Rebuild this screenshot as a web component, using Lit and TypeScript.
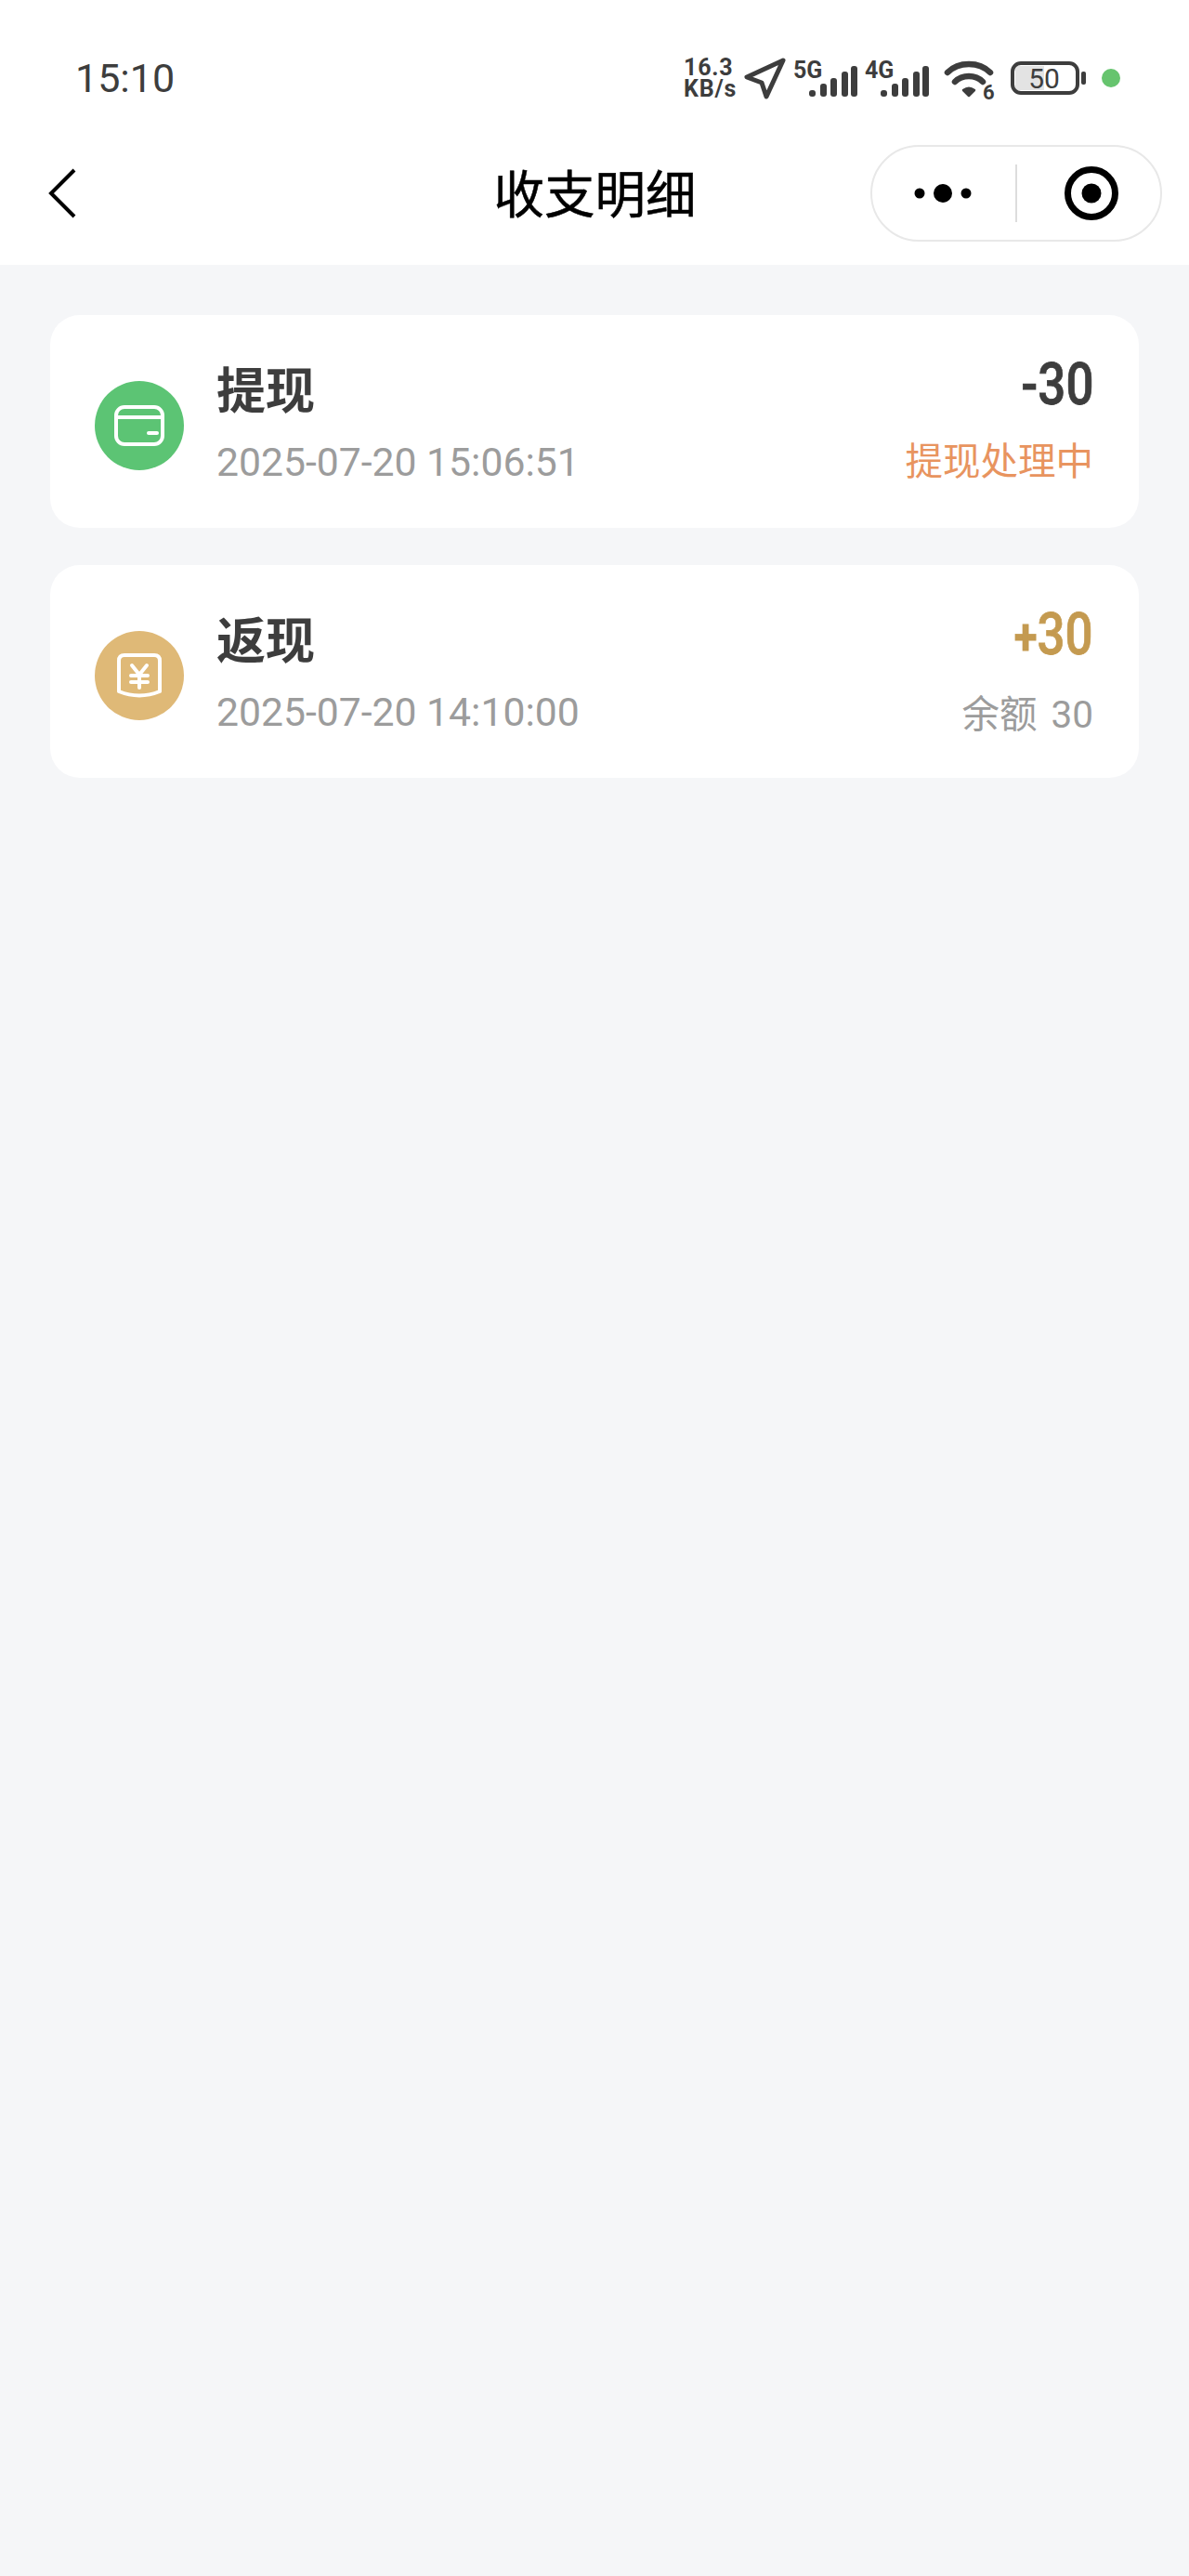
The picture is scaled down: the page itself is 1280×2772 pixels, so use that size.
import { LitElement, html, css, svg } from 'lit';
import { customElement } from 'lit/decorators.js';

const records = [
  {
    icon: 'card',
    title: '提现',
    time: '2025-07-20 15:06:51',
    sign: '-',
    amount: '30',
    note: '提现处理中',
    amountClass: 'dark',
    noteClass: 'orange'
  },
  {
    icon: 'bag',
    title: '返现',
    time: '2025-07-20 14:10:00',
    sign: '+',
    amount: '30',
    note: '余额 30',
    amountClass: 'gold',
    noteClass: 'grey'
  }
];

@customElement('app-root')
export class AppRoot extends LitElement {
  static styles = css`
    :host {
      display: block;
      width: 1280px;
      min-height: 2772px;
      background: #f5f6f8;
      font-family: Roboto, 'Noto Sans CJK SC', sans-serif;
      color: #3d3d3d;
    }

    .header {
      background: #fff;
      height: 285px;
    }

    .status {
      box-sizing: border-box;
      height: 140px;
      padding: 28px 73px 0 81px;
      display: flex;
      align-items: center;
      justify-content: space-between;
    }

    .time {
      font-size: 43px;
      line-height: 50px;
      font-weight: 400;
    }

    .cluster {
      display: flex;
      align-items: center;
    }

    .speed {
      display: flex;
      flex-direction: column;
      width: 60px;
      margin-right: 3px;
      font-size: 25px;
      line-height: 23px;
      font-weight: 700;
      letter-spacing: 0.8px;
    }

    .cluster svg {
      display: block;
    }

    .signal-gap {
      width: 7px;
    }

    .icon-wifi {
      margin-left: 15px;
    }

    .icon-battery {
      margin-left: 14px;
    }

    .icon-dot {
      margin-left: 16px;
    }

    .icon-nav {
      margin-right: 7px;
    }

    .nav {
      box-sizing: border-box;
      height: 145px;
      padding: 0 29px 10px 30px;
      display: grid;
      grid-template-columns: 1fr auto 1fr;
      align-items: center;
    }

    .back {
      display: block;
      margin-left: 22px;
    }

    .nav-title {
      padding-bottom: 4px;
      font-size: 54.5px;
      line-height: 70px;
      font-weight: 400;
      color: #000;
      font-family: 'Noto Sans CJK SC', sans-serif;
      -webkit-text-stroke: 0.5px #000;
    }

    .capsule {
      justify-self: end;
      box-sizing: border-box;
      width: 314px;
      height: 104px;
      border: 2px solid #e8e8e8;
      border-radius: 52px;
    }

    .capsule svg {
      display: block;
    }

    .list {
      padding: 54px 54px;
      display: flex;
      flex-direction: column;
      gap: 40px;
    }

    .card {
      box-sizing: border-box;
      height: 229px;
      background: #fff;
      border-radius: 32px;
      padding: 39px 49px 39px 48px;
      display: flex;
    }

    .badge {
      width: 96px;
      height: 96px;
      margin-top: 32px;
      border-radius: 50%;
      display: flex;
      align-items: center;
      justify-content: center;
      flex: none;
    }

    .badge.card-icon {
      background: #5cc474;
    }

    .badge.bag-icon {
      background: #dfb977;
    }

    .info {
      flex: 1;
      margin-left: 35px;
      padding-top: 3px;
    }

    .title {
      font-size: 53px;
      line-height: 72px;
      font-weight: 700;
      font-family: 'Noto Sans CJK SC', sans-serif;
    }

    .date {
      margin-top: 14px;
      font-size: 42.7px;
      line-height: 60px;
      font-weight: 400;
      color: #9c9c9c;
    }

    .side {
      text-align: right;
    }

    .amount {
      font-size: 63px;
      line-height: 72px;
      font-weight: 500;
      -webkit-text-stroke: 0.8px currentColor;
      transform: scaleX(0.84);
      transform-origin: right center;
      margin-bottom: 17px;
    }

    .amount.dark {
      color: #3d3d3d;
    }

    .amount.gold {
      color: #c49a50;
    }

    .amount.gold .sign {
      font-size: 54px;
      font-weight: 700;
    }

    .note {
      font-size: 40.5px;
      line-height: 60px;
      font-weight: 400;
    }

    .note.orange {
      color: #e8945f;
    }

    .note.grey {
      color: #9c9c9c;
      word-spacing: 5px;
    }
  `;

  renderSignal(label: string) {
    const bars = [
      [17, 95],
      [29, 88],
      [40, 82],
      [52, 75],
      [62, 69]
    ];
    return html`<svg width="70" height="44" viewBox="0 60 70 44" fill="#3d3d3d">
      <text x="0" y="82" font-size="25" font-weight="700" font-family="Roboto, sans-serif">${label}</text>
      ${bars.map(([x, top]) => svg`<rect x=${x} y=${top} width="7" height=${102 - top} rx="3"></rect>`)}
    </svg>`;
  }

  renderIcon(icon: string) {
    if (icon === 'card') {
      return html`<svg width="56" height="46" viewBox="0 0 56 46" fill="none" stroke="#fff" stroke-width="4">
        <rect x="3" y="3" width="50" height="40" rx="9"></rect>
        <path d="M3 14H53"></path>
        <path d="M38 31H47" stroke-linecap="round"></path>
      </svg>`;
    }
    return html`<svg width="48" height="50" viewBox="0 0 48 50" fill="none" stroke="#fff" stroke-width="4" stroke-linecap="round" stroke-linejoin="round">
      <path d="M8 3H40Q46 3 46 9V42Q24 51 2 42V9Q2 3 8 3Z"></path>
      <path d="M16 14L24 24L32 14M15 25H33M15 32H33M24 24V38"></path>
    </svg>`;
  }

  render() {
    return html`
      <div class="header">
        <div class="status">
          <div class="time">15:10</div>
          <div class="cluster">
            <div class="speed"><span>16.3</span><span>KB/s</span></div>
            <svg class="icon-nav" width="48" height="48" viewBox="0 0 48 48" fill="none" stroke="#3d3d3d" stroke-width="5" stroke-linejoin="round">
              <path d="M44 5L5 23L21 29L26 44Z"></path>
            </svg>
            ${this.renderSignal('5G')}
            <div class="signal-gap"></div>
            ${this.renderSignal('4G')}
            <svg class="icon-wifi" width="58" height="56" viewBox="0 -6 58 56">
              <g fill="none" stroke="#3d3d3d" stroke-width="6.5" stroke-linecap="round">
                <path d="M4 16C16 4 38 4 50 16"></path>
                <path d="M12 26C20 18 34 18 42 26"></path>
              </g>
              <path d="M21 35C25 32 29 32 33 35L27 41Z" fill="#3d3d3d" stroke="#3d3d3d" stroke-width="2.5" stroke-linejoin="round"></path>
              <text x="42" y="45" font-size="22" font-weight="700" font-family="Roboto, sans-serif" fill="#3d3d3d">6</text>
            </svg>
            <svg class="icon-battery" width="81" height="36" viewBox="0 0 81 36">
              <path d="M8 5H36V31H8Q5 31 5 28V8Q5 5 8 5Z" fill="#e3e3e3"></path>
              <rect x="2" y="2" width="70" height="32" rx="9" fill="none" stroke="#3d3d3d" stroke-width="4"></rect>
              <text x="36" y="29" text-anchor="middle" font-size="30" font-family="Roboto, sans-serif" fill="#3d3d3d">50</text>
              <rect x="76" y="11" width="5" height="14" rx="2" fill="#3d3d3d"></rect>
            </svg>
            <svg class="icon-dot" width="22" height="22" viewBox="0 0 22 22">
              <circle cx="11" cy="11" r="10" fill="#66c46e"></circle>
            </svg>
          </div>
        </div>
        <div class="nav">
          <svg class="back" width="30" height="54" viewBox="0 0 30 54" fill="none" stroke="#000" stroke-width="4">
            <path d="M28 2L3 27L28 52"></path>
          </svg>
          <div class="nav-title">收支明细</div>
          <div class="capsule">
            <svg width="310" height="100" viewBox="939 158 310 100">
              <circle cx="990" cy="208" r="5.5"></circle>
              <circle cx="1015" cy="208" r="10"></circle>
              <circle cx="1040" cy="208" r="5.5"></circle>
              <rect x="1093" y="177" width="2" height="62" fill="#ddd"></rect>
              <circle cx="1175" cy="208" r="25.5" fill="none" stroke="#000" stroke-width="7"></circle>
              <circle cx="1175" cy="208" r="10.5"></circle>
            </svg>
          </div>
        </div>
      </div>
      <div class="list">
        ${records.map(r => html`
          <div class="card">
            <div class="badge ${r.icon}-icon">${this.renderIcon(r.icon)}</div>
            <div class="info">
              <div class="title">${r.title}</div>
              <div class="date">${r.time}</div>
            </div>
            <div class="side">
              <div class="amount ${r.amountClass}"><span class="sign">${r.sign}</span>${r.amount}</div>
              <div class="note ${r.noteClass}">${r.note}</div>
            </div>
          </div>
        `)}
      </div>
    `;
  }
}
